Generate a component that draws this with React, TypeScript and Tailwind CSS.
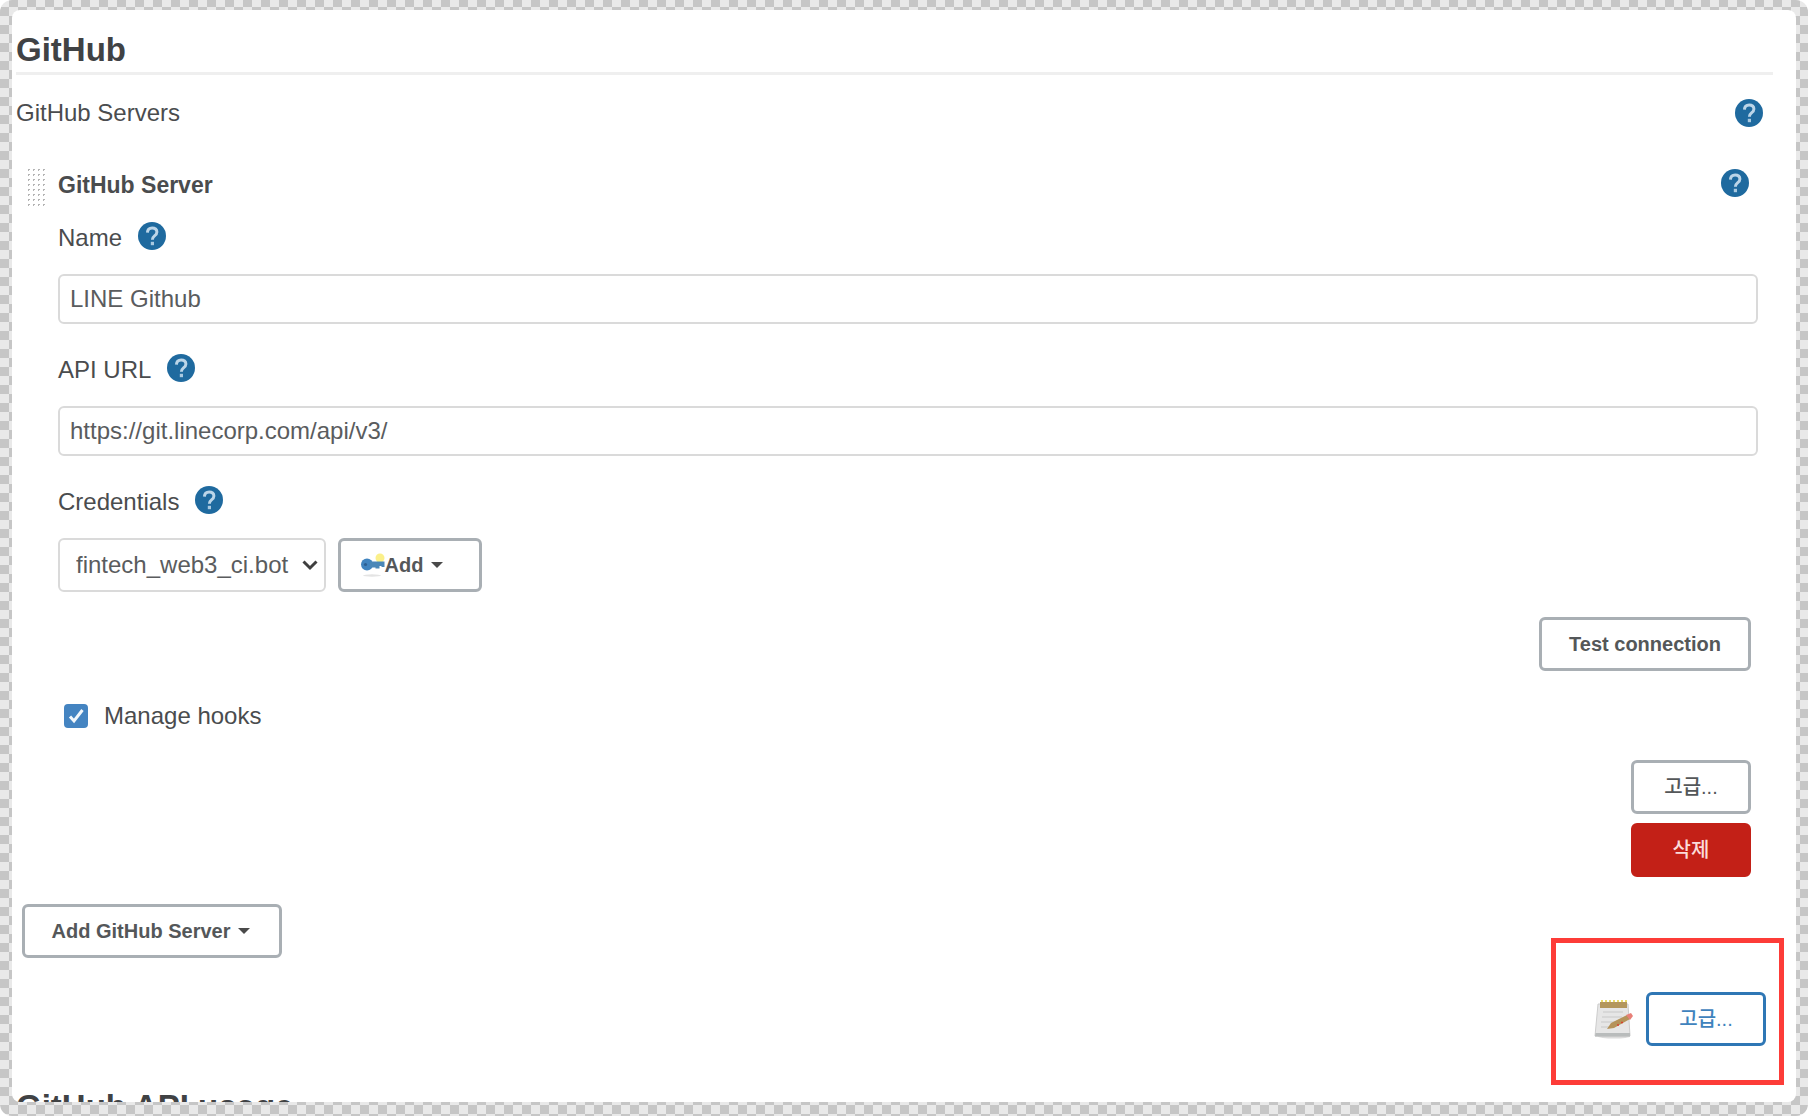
import React from "react";

function HelpIcon({ label }: { label: string }) {
  return (
    <button type="button" aria-label={label} className="block size-7 shrink-0">
      <svg viewBox="0 0 28 28" className="block size-7">
        <circle cx="14" cy="14" r="14" fill="#1f6a9f" />
        <path
          d="M9.400 10.600C9.600 7.200 11.500 5.900 14.200 5.900c2.800 0 4.700 1.600 4.700 4 0 1.900-1 2.900-2.400 4-1.500 1.200-2.100 1.800-2.100 3.900"
          fill="none"
          stroke="#bcd5e8"
          strokeWidth="3"
        />
        <rect x="12.800" y="19.800" width="3.200" height="3.400" fill="#a9c9e0" />
      </svg>
    </button>
  );
}

function Caret() {
  return (
    <svg viewBox="0 0 12 6" className="h-1.5 w-3 shrink-0">
      <path d="M0 0h12L6 6z" fill="#4a4a4a" />
    </svg>
  );
}

function KeyIcon() {
  return (
    <svg viewBox="0 0 24 24" className="size-6 shrink-0">
      <ellipse cx="11" cy="22.500" rx="9" ry="1.200" fill="#e4e4e4" />
      <circle cx="19" cy="5" r="4.500" fill="#fbf08a" />
      <circle cx="6" cy="11.500" r="6" fill="#3f83bf" />
      <path d="M9 8.500h14.500v5.500h-3v-1h-2v2.500h-4v-1H9z" fill="#4a87b8" />
      <circle cx="4.500" cy="11.500" r="1.600" fill="#2c5f92" />
    </svg>
  );
}

function NotepadIcon() {
  return (
    <svg viewBox="0 0 40 40" className="size-10 shrink-0">
      <ellipse cx="20" cy="37.500" rx="16" ry="2" fill="#dcdcdc" />
      <path d="M4 5h30l2 32H1z" fill="#e6e6e6" stroke="#cccccc" />
      <path d="M1.500 34h34.500v3.500H1z" fill="#b9bcbc" />
      <path d="M9 13h20M8 18h20M7 23h14M7 28h10" stroke="#d2d2d2" strokeWidth="1.500" />
      <rect x="6" y="3" width="27" height="6" fill="#b3965c" />
      <path d="M7 2h26" stroke="#eadb6a" strokeWidth="2" strokeDasharray="2 2" />
      <path d="M13 30l4-6 16-8 3 4-16 9z" fill="#b5935a" />
      <path d="M32 16l5-2 2 3-3 4z" fill="#e88078" />
      <path d="M23 26h2M27 23.500h2" stroke="#d8412f" strokeWidth="1.500" />
    </svg>
  );
}

function Button({ children, tone = "plain", className = "" }: { children: React.ReactNode; tone?: "plain" | "danger" | "focus"; className?: string }) {
  const tones = {
    plain: "border-[#a9afb4] bg-white text-[#545759]",
    danger: "border-[#c32017] bg-[#c32017] text-[#fbdcda]",
    focus: "border-[#2f77b5] bg-white text-[#3f83bd]",
  };
  return (
    <button
      type="button"
      className={`flex h-[54px] items-center justify-center rounded-md border-3 text-xl ${tones[tone]} ${className}`}
    >
      {children}
    </button>
  );
}

function TextField({ id, label, value }: { id: string; label: string; value: string }) {
  return (
    <div className="mb-[26px]">
      <div className="flex h-14 items-start gap-4 pt-1">
        <label htmlFor={id} className="text-2xl leading-8">
          {label}
        </label>
        <HelpIcon label={`Help for ${label}`} />
      </div>
      <input
        id={id}
        type="text"
        defaultValue={value}
        className="block h-[50px] w-full rounded-md border-2 border-[#dadada] bg-white px-[10px] text-2xl text-[#5a5c5e]"
      />
    </div>
  );
}

export default function App() {
  return (
    <div className="h-screen bg-white font-['Liberation_Sans','Noto_Sans_CJK_KR',sans-serif] text-[#4a4c4e]">
      <div className="h-full overflow-hidden rounded-xl bg-[repeating-conic-gradient(#e9e9e9_0_25%,#c6c6c6_0_50%)] bg-size-[18px_18px] bg-position-[9px_-2px] px-3 pt-[10px] pb-[14px]">
        <main className="h-full overflow-hidden rounded-lg bg-white pl-1">
          <h2 className="mr-[23px] h-[65px] border-b-3 border-[#efefef] pt-5 text-[33px] leading-10 font-bold text-[#404244]">
            GitHub
          </h2>

          <div className="mr-[33px] flex items-center justify-between pt-5">
            <span className="text-2xl leading-9">GitHub Servers</span>
            <HelpIcon label="Help for GitHub Servers" />
          </div>

          <section className="mr-[38px] flex pt-9">
            <div className="ml-[10px] h-[42px] w-5 shrink-0 bg-[radial-gradient(#b4b4b4_1px,transparent_1px)] bg-size-[5px_5px]" />
            <div className="ml-3 min-w-0 flex-1">
              <div className="mr-[9px] flex h-[51px] items-start justify-between pt-0.5">
                <h3 className="text-[23px] leading-8 font-bold">GitHub Server</h3>
                <HelpIcon label="Help for GitHub Server" />
              </div>

              <TextField id="name" label="Name" value="LINE Github" />
              <TextField id="api-url" label="API URL" value="https://git.linecorp.com/api/v3/" />

              <div className="flex h-14 items-start gap-4 pt-1">
                <label htmlFor="credentials" className="text-2xl leading-8">
                  Credentials
                </label>
                <HelpIcon label="Help for Credentials" />
              </div>
              <div className="flex gap-3">
                <div className="relative w-[268px]">
                  <select
                    id="credentials"
                    className="h-[54px] w-full appearance-none rounded-md border-2 border-[#dadada] bg-white pl-4 text-2xl text-[#5a5c5e]"
                  >
                    <option>fintech_web3_ci.bot</option>
                  </select>
                  <svg viewBox="0 0 16 10" className="pointer-events-none absolute top-5 right-2 h-[14px] w-4">
                    <path d="M1.500 1.500L8 8l6.500-6.500" fill="none" stroke="#3f3f3f" strokeWidth="3" />
                  </svg>
                </div>
                <Button className="w-[144px] pr-4 font-bold">
                  <KeyIcon />
                  <span className="mr-2">Add</span>
                  <Caret />
                </Button>
              </div>

              <div className="mr-[7px] flex justify-end pt-[25px]">
                <Button className="w-[212px] font-bold">Test connection</Button>
              </div>

              <label className="flex items-center gap-4 pt-[27px] pl-[6px] text-2xl leading-9">
                <span className="relative size-6">
                  <input type="checkbox" defaultChecked className="peer block size-6 appearance-none rounded bg-[#d8d8d8] checked:bg-[#4484c1]" />
                  <svg viewBox="0 0 24 24" className="pointer-events-none absolute inset-0 hidden peer-checked:block">
                    <path d="M6 12.500l4 4.500 8.500-11" fill="none" stroke="#f2f7fb" strokeWidth="3" />
                  </svg>
                </span>
                Manage hooks
              </label>

              <div className="mr-[7px] flex flex-col items-end gap-[9px] pt-[26px]">
                <Button className="w-[120px] font-medium">고급...</Button>
                <Button tone="danger" className="w-[120px] font-medium">
                  삭제
                </Button>
              </div>
            </div>
          </section>

          <div className="mr-3 flex items-start justify-between pt-[27px]">
            <Button className="ml-[6px] w-[260px] gap-2 pr-0.5 font-bold">
              Add GitHub Server
              <Caret />
            </Button>
            <div className="mt-[34px] flex h-[147px] w-[233px] items-center justify-end gap-3 border-5 border-[#fd3c38] pt-[14px] pr-[13px]">
              <NotepadIcon />
              <Button tone="focus" className="w-[120px] font-medium">
                고급...
              </Button>
            </div>
          </div>

          <h2 className="pt-0.5 text-[33px] leading-10 font-bold text-[#404244]">GitHub API usage</h2>
        </main>
      </div>
    </div>
  );
}
